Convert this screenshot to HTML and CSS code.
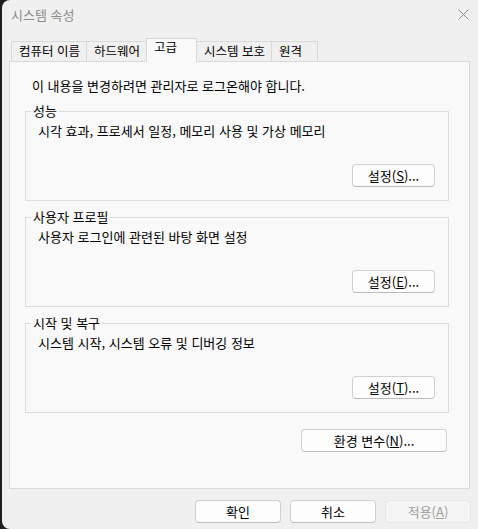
FILE: index.html
```html
<!DOCTYPE html>
<html lang="ko">
<head>
<meta charset="utf-8">
<title>시스템 속성</title>
<link rel="stylesheet" href="styles.css">
</head>
<body>
<div class="window">
  <div class="titlebar">
    <span class="title">시스템 속성</span>
    <svg class="close" width="11" height="11" viewBox="0 0 11 11"><path d="M0.5 0.5 L10.5 10.5 M10.5 0.5 L0.5 10.5" stroke="#8f8f8f" stroke-width="1" fill="none"/></svg>
  </div>
  <div class="content">
    <div class="tabs">
      <div class="tab">컴퓨터 이름</div>
      <div class="tab">하드웨어</div>
      <div class="tab selected">고급</div>
      <div class="tab">시스템 보호</div>
      <div class="tab last">원격</div>
    </div>
    <div class="panel">
      <p class="intro">이 내용을 변경하려면 관리자로 로그온해야 합니다.</p>
      <fieldset class="group">
        <legend>성능</legend>
        <p class="desc">시각 효과, 프로세서 일정, 메모리 사용 및 가상 메모리</p>
        <div class="row"><button class="btn small">설정(<u>S</u>)...</button></div>
      </fieldset>
      <fieldset class="group">
        <legend>사용자 프로필</legend>
        <p class="desc">사용자 로그인에 관련된 바탕 화면 설정</p>
        <div class="row"><button class="btn small">설정(<u>E</u>)...</button></div>
      </fieldset>
      <fieldset class="group">
        <legend>시작 및 복구</legend>
        <p class="desc">시스템 시작, 시스템 오류 및 디버깅 정보</p>
        <div class="row"><button class="btn small">설정(<u>T</u>)...</button></div>
      </fieldset>
      <div class="env-row"><button class="btn wide">환경 변수(<u>N</u>)...</button></div>
    </div>
    <div class="footer">
      <button class="btn dialog">확인</button>
      <button class="btn dialog">취소</button>
      <button class="btn dialog" disabled>적용(<u>A</u>)</button>
    </div>
  </div>
</div>
</body>
</html>
```
FILE: styles.css
```css
* { box-sizing: border-box; }
html, body { margin: 0; padding: 0; }
body {
  background: #1e1e1e;
  font-family: "Noto Sans CJK KR", "Noto Sans", sans-serif;
  font-size: 13px;
  color: #000;
  width: 478px;
  height: 529px;
  overflow: hidden;
}
.window {
  margin-left: 2px;
  height: 529px;
  background: #f0f0f0;
  border-radius: 8px 0 0 8px;
  display: flex;
  flex-direction: column;
}
.titlebar {
  height: 30px;
  display: flex;
  align-items: center;
  justify-content: space-between;
  padding: 0 9px 1px 9px;
}
.title { color: #8c8c8c; line-height: 16px; }
.close { display: block; }
.content {
  padding: 0 8px 0 7px;
  display: flex;
  flex-direction: column;
}
.tabs {
  display: flex;
  align-items: flex-end;
  height: 31px;
  margin-left: 2px;
  font-size: 12.5px;
}
.tab {
  height: 20px;
  padding: 1px 6px 0 7px;
  border: 1px solid #d9d9d9;
  border-bottom: none;
  margin-right: -1px;
  line-height: 16px;
  background: #f0f0f0;
  white-space: nowrap;
}
.tab.selected {
  position: relative;
  z-index: 2;
  height: 24px;
  margin-bottom: -1px;
  padding: 0 7px;
  background: #f9f9f9;
  width: 51px;
}
.tab.last { width: 47px; }
.panel {
  height: 428px;
  background: #f9f9f9;
  border: 1px solid #d9d9d9;
  padding: 16px 20px 0 15px;
  display: flex;
  flex-direction: column;
}
.intro { margin: 0 0 9px 7px; line-height: 16px; }
.group {
  margin: 0;
  padding: 0 13px 13px 0;
  border: 1px solid #dcdcdc;
  min-width: 0;
}
.group + .group { margin-top: 8px; }
.group legend {
  margin-left: 5px;
  padding: 0 2px;
  line-height: 16px;
}
.desc { margin: 4px 0 0 12px; line-height: 16px; }
.row { display: flex; justify-content: flex-end; margin-top: 25px; }
.env-row { display: flex; justify-content: flex-end; margin: 16px 2px 0 0; }
.btn {
  height: 23px;
  padding: 0;
  font: inherit;
  line-height: 16px;
  color: #000;
  background: #fdfdfd;
  border: 1px solid #d0d0d0;
  border-bottom-color: #bdbdbd;
  border-radius: 4px;
}
.btn u { text-underline-offset: 1px; }
.btn.small { width: 83px; }
.btn.wide { width: 146px; }
.btn.dialog { width: 86px; }
.btn:disabled {
  background: #f5f5f5;
  border-color: #e6e6e6;
  color: #9d9d9d;
}
.footer {
  display: flex;
  justify-content: flex-end;
  gap: 9px;
  padding-top: 11px;
  margin-right: -1px;
}
```
